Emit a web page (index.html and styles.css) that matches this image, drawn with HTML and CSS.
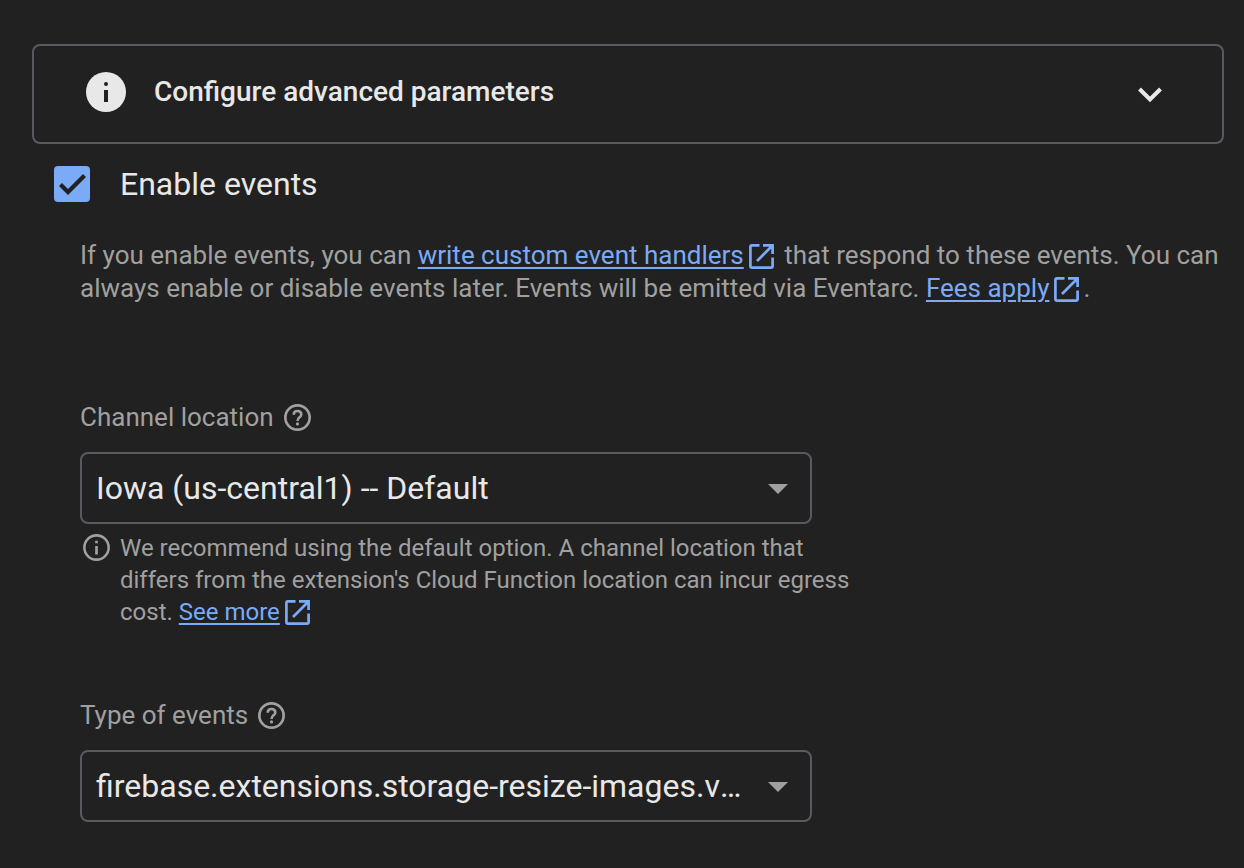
FILE: index.html
```html
<!DOCTYPE html>
<html lang="en">
<head>
<meta charset="utf-8">
<meta name="viewport" content="width=device-width, initial-scale=1">
<title>Configure extension</title>
<link rel="stylesheet" href="styles.css">
</head>
<body>
<svg class="sprite" aria-hidden="true">
  <symbol id="open" viewBox="0 0 25 25"><path d="M10.500 1.400H3Q1.400 1.400 1.400 3V22Q1.400 23.600 3 23.600H22Q23.600 23.600 23.600 22V13.500M14 1.400H23.600V10M23 2L8 17" fill="none" stroke="currentColor" stroke-width="2.700"/></symbol>
  <symbol id="help" viewBox="2 2 20 20"><circle cx="12" cy="12" r="9" fill="none" stroke="currentColor" stroke-width="2"/><path fill="none" stroke="currentColor" stroke-width="1.900" d="M9.200 9.900C9.200 8.200 10.400 7.200 12 7.200S14.800 8.200 14.800 9.700C14.800 11.800 12 12 12 14.500"/><circle cx="12" cy="16.800" r="1.200" fill="currentColor"/></symbol>
</svg>
<main class="page">
  <button class="advanced" type="button" aria-expanded="false">
    <svg class="advanced-icon" viewBox="0 0 40 40" aria-hidden="true"><circle cx="20" cy="20" r="20" fill="currentColor"/><circle class="cutout" cx="20" cy="12" r="2"/><path class="cutout" d="M18 18h4v12h-4z"/></svg>
    <span class="advanced-title">Configure advanced parameters</span>
    <svg class="chevron" viewBox="0 0 24 16" aria-hidden="true"><path d="M1.500 2L12 12.500L22.500 2" fill="none" stroke="currentColor" stroke-width="4"/></svg>
  </button>

  <label class="enable"><input class="enable-box" type="checkbox" checked><span>Enable events</span></label>

  <div class="settings">
    <p class="intro">If you enable events, you can <a href="#handlers">write custom event handlers</a><svg class="open-icon" aria-hidden="true"><use href="#open"/></svg> that respond to these events. You can always enable or disable events later. Events will be emitted via Eventarc. <a href="#fees">Fees apply</a><svg class="open-icon" aria-hidden="true"><use href="#open"/></svg>.</p>

    <section class="field">
      <div class="field-head">
        <label for="location">Channel location</label>
        <svg class="help-icon" aria-hidden="true"><use href="#help"/></svg>
      </div>
      <div class="select-wrap">
        <select id="location" class="select" aria-describedby="location-hint"><option>Iowa (us-central1) -- Default</option></select>
        <svg class="arrow" viewBox="0 0 20 10" aria-hidden="true"><path d="M0 0h20L10 10z" fill="currentColor"/></svg>
      </div>
      <div class="hint">
        <svg class="hint-icon" viewBox="2 2 20 20" aria-hidden="true"><circle cx="12" cy="12" r="9" fill="none" stroke="currentColor" stroke-width="1.900"/><path fill="currentColor" d="M11 7h2v1.900h-2zM11 10.900h2v6.200h-2z"/></svg>
        <p id="location-hint" class="hint-text">We recommend using the default option. A channel location that differs from the extension's Cloud Function location can incur egress cost. <a href="#egress">See more</a><svg class="open-icon" aria-hidden="true"><use href="#open"/></svg></p>
      </div>
    </section>

    <section class="field">
      <div class="field-head">
        <label for="events">Type of events</label>
        <svg class="help-icon" aria-hidden="true"><use href="#help"/></svg>
      </div>
      <div class="select-wrap">
        <select id="events" class="select"><option>firebase.extensions.storage-resize-images.v1.complete</option></select>
        <svg class="arrow" viewBox="0 0 20 10" aria-hidden="true"><path d="M0 0h20L10 10z" fill="currentColor"/></svg>
      </div>
    </section>
  </div>
</main>
</body>
</html>
```
FILE: styles.css
```css
:root {
  --bg: #212121;
  --line: #575b61;
  --text: #e8e8e8;
  --muted: #a0a0a0;
  --blue: #7baaf7;
}

* { box-sizing: border-box; }

body {
  margin: 0;
  background: var(--bg);
  color: var(--text);
  font-family: Roboto, sans-serif;
}

p { margin: 0; }

svg { flex: none; }

.sprite {
  position: absolute;
  width: 0;
  height: 0;
}

.page {
  padding: 44px 20px 44px 32px;
}

.advanced {
  display: flex;
  align-items: center;
  width: 100%;
  padding: 26px 60px 30px 52px;
  border: 2px solid var(--line);
  border-radius: 8px;
  background: transparent;
  color: var(--text);
  font: 500 28px/40px Roboto, sans-serif;
  text-align: left;
}

.advanced-icon {
  width: 40px;
  height: 40px;
  margin-right: 28px;
}

.cutout { fill: var(--bg); }

.advanced-title { flex: 1; }

.chevron {
  width: 24px;
  height: 16px;
  margin-top: 6px;
}

.enable {
  display: flex;
  align-items: center;
  gap: 30px;
  width: fit-content;
  margin: 20px 0 0 22px;
  font-size: 32px;
  line-height: 40px;
}

.enable-box {
  appearance: none;
  display: grid;
  place-items: center;
  width: 36px;
  height: 36px;
  margin: 0;
  border-radius: 4px;
  background: var(--blue);
}

.enable-box:checked::before {
  content: "";
  width: 28px;
  height: 22px;
  background: var(--bg);
  clip-path: polygon(1px 13px, 4px 10px, 10px 16px, 25px 1px, 28px 4px, 10px 22px);
}

.settings { padding-left: 48px; }

.intro {
  margin-top: 35px;
  color: var(--muted);
  font-size: 26px;
  line-height: 33px;
}

a {
  color: var(--blue);
  text-decoration: underline;
  text-decoration-thickness: 2px;
  text-underline-offset: 3px;
}

.open-icon {
  width: 25px;
  height: 25px;
  margin: -4px 4px -4px 5px;
  color: var(--blue);
  vertical-align: -1px;
}

.field { margin-top: 71px; }

.intro + .field { margin-top: 96px; }

.field-head {
  display: flex;
  align-items: center;
  gap: 10px;
  color: var(--muted);
  font-size: 26px;
  line-height: 33px;
}

.help-icon {
  width: 27px;
  height: 27px;
}

.select-wrap {
  position: relative;
  max-width: 732px;
  margin-top: 18px;
}

.select {
  appearance: none;
  display: block;
  width: 100%;
  height: 72px;
  padding: 0 64px 0 14px;
  border: 2px solid var(--line);
  border-radius: 8px;
  background: transparent;
  color: var(--text);
  font: 32px/40px Roboto, sans-serif;
  text-overflow: ellipsis;
}

.arrow {
  position: absolute;
  top: 32px;
  right: 24px;
  width: 20px;
  height: 10px;
  color: var(--muted);
  pointer-events: none;
}

.hint {
  display: flex;
  gap: 10px;
  max-width: 780px;
  margin-top: 8px;
  padding-left: 3px;
  color: var(--muted);
  font-size: 24px;
  line-height: 32px;
}

.hint-icon {
  width: 27px;
  height: 27px;
  margin-top: 2px;
}
```
